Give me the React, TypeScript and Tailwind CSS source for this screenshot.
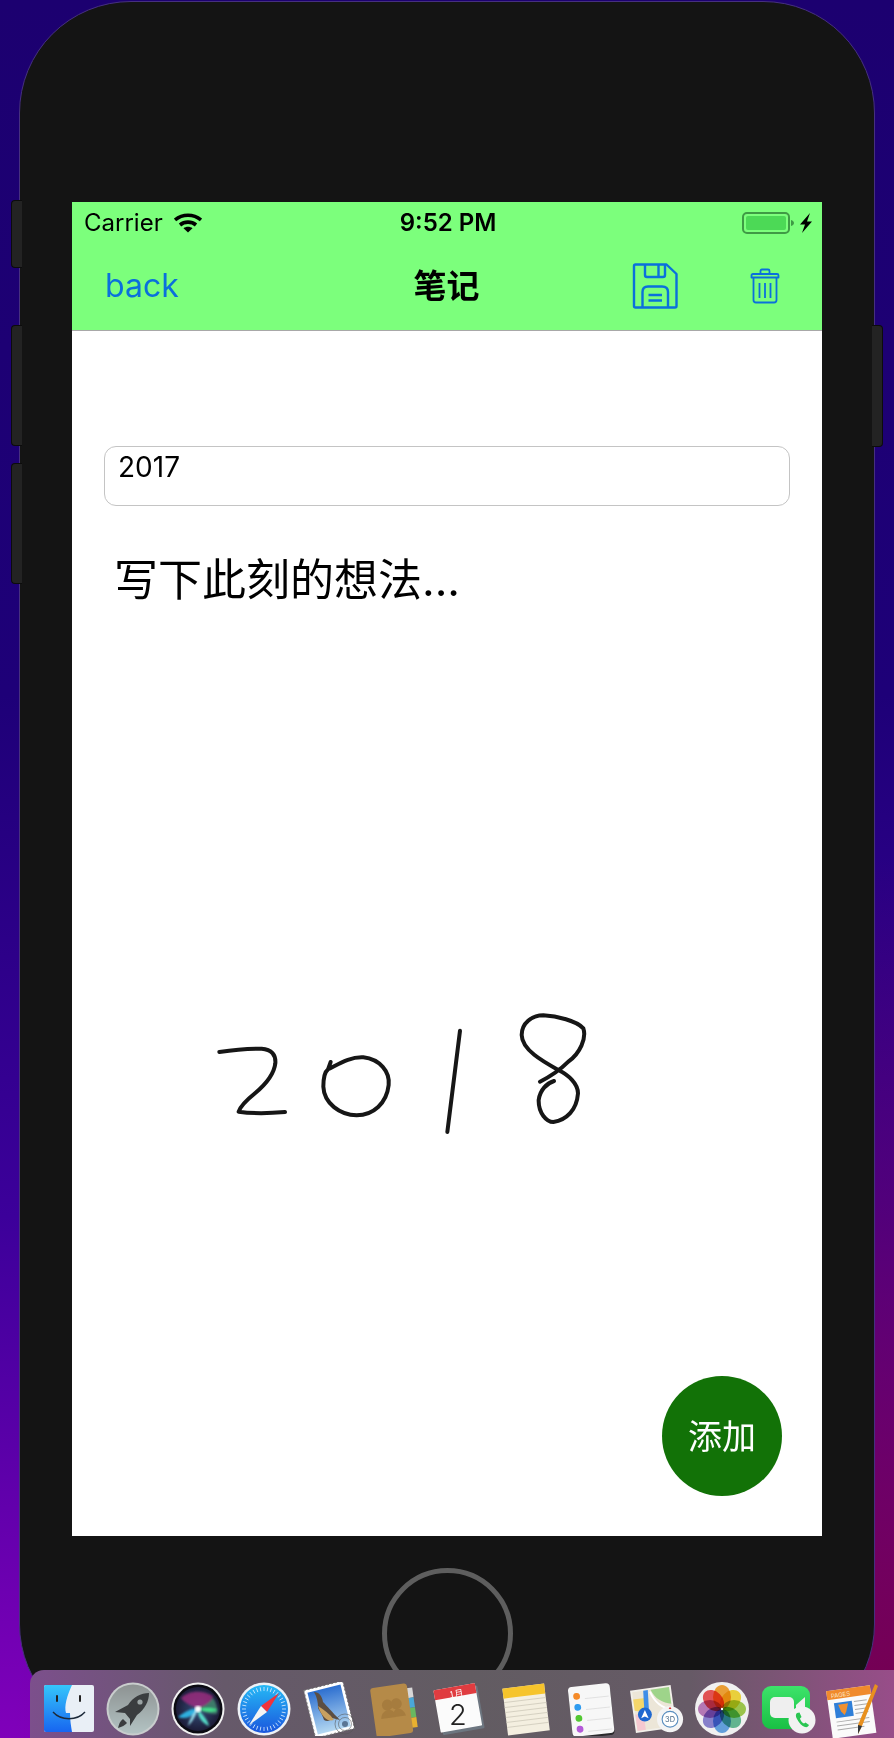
import React from "react";

const sans = "font-['Inter','Noto_Sans_CJK_SC',sans-serif]";

function Wifi() {
  return (
    <svg width="28" height="20" viewBox="0 0 28 20" className="text-black">
      <path d="M1 7 C8.5 0.6 19.5 0.6 27 7" fill="none" stroke="currentColor" strokeWidth="3.6" />
      <path d="M6 12 C10.5 8.2 17.5 8.2 22 12" fill="none" stroke="currentColor" strokeWidth="3.6" />
      <path d="M9.5 15.2 C12 13.2 16 13.2 18.5 15.2 L14 19.6 Z" fill="currentColor" />
    </svg>
  );
}

function Battery() {
  return (
    <svg width="70" height="24" viewBox="0 0 70 24">
      <rect x="1" y="2" width="46" height="20" rx="4" fill="none" stroke="#3f9a45" strokeWidth="2" />
      <rect x="4" y="5" width="40" height="14" rx="2" fill="#4cd956" />
      <path d="M49 9 C51 9.5 52 11 52 12 C52 13 51 14.5 49 15 Z" fill="#3f9a45" />
      <path d="M58 13.5 L68 2 L65 10.5 L70 10.5 L60 22 L63 13.5 Z" fill="#000" />
    </svg>
  );
}

function SaveIcon() {
  return (
    <svg width="46" height="46" viewBox="0 0 46 46" fill="none" stroke="#0a70dc" strokeWidth="2.4" strokeLinejoin="round">
      <path d="M2 3 Q2 1.5 3.5 1.5 L34.5 1.5 L44.5 11 L44.5 43 Q44.5 44.5 43 44.5 L3.5 44.5 Q2 44.5 2 43 Z" />
      <path d="M13 2 L13 12 Q13 14 15 14 L31 14 Q33 14 33 12 L33 2" />
      <path d="M26.5 2 L26.5 13.5" />
      <path d="M10.5 44 L10.5 29 Q10.5 23.5 16 23.5 L30 23.5 Q36 23.5 36 29 L36 44" />
      <path d="M16.5 32 L30 32 M16.5 37.5 L30 37.5" />
    </svg>
  );
}

function TrashIcon() {
  return (
    <svg width="30" height="36" viewBox="0 0 30 36" fill="none" stroke="#0a70dc" strokeWidth="1.8" strokeLinejoin="round">
      <path d="M1.5 7.5 Q1.5 6 3 6 L27 6 Q28.5 6 28.5 7.5 L28.5 9.5 L1.5 9.5 Z" />
      <path d="M10.5 6 L10.5 3 Q10.5 1.5 12 1.5 L18 1.5 Q19.5 1.5 19.5 3 L19.5 6" />
      <path d="M3.5 9.5 L3.5 32 Q3.5 34.5 6 34.5 L24 34.5 Q26.5 34.5 26.5 32 L26.5 9.5" />
      <path d="M9.5 15 L9.5 30 M15 15 L15 30 M20.5 15 L20.5 30" />
    </svg>
  );
}

function Handwriting() {
  return (
    <svg viewBox="0 0 1200 450" className="w-[400px] h-[150px] ml-[128px] mt-[390px] shrink-0" fill="none" stroke="#161616" strokeWidth="12" strokeLinecap="round" strokeLinejoin="round">
      <path d="M58 156 C100 150 150 146 185 146 C215 148 228 165 226 190 C222 225 195 255 165 280 C145 296 122 318 116 335 C150 340 210 340 255 336" />
      <path d="M392 186 L384 208 C420 190 450 170 490 172 C540 178 570 215 566 255 C560 310 520 345 470 346 C420 345 372 310 370 260 C370 235 375 215 384 208" />
      <path d="M780 92 L742 396" />
      <path d="M1062 243 C1040 250 1020 270 1016 300 C1015 340 1040 366 1060 366 C1100 360 1130 330 1134 280 C1134 250 1105 225 1075 210 C1030 185 966 150 965 105 C965 70 995 46 1030 46 C1070 48 1130 62 1150 85 C1160 115 1140 160 1105 185 C1090 200 1060 225 1020 245" />
    </svg>
  );
}

/* dock icons, all on a 54 box */
function Finder() {
  return (
    <svg viewBox="0 0 54 54" className="w-[54px] h-[54px] shrink-0">
      <defs>
        <linearGradient id="fb" x1="0" y1="0" x2="0" y2="1"><stop offset="0" stopColor="#35c6fb" /><stop offset="1" stopColor="#1765f0" /></linearGradient>
      </defs>
      <rect x="4" y="3" width="50" height="47" rx="2" fill="#e9eff6" />
      <path d="M6 3 L32 3 C27 14 24 24 26 31 L30 31 C30 38 31 44 32 50 L6 50 Q4 50 4 48 L4 5 Q4 3 6 3 Z" fill="url(#fb)" />
      <path d="M17 14 L17 19 M40 14 L40 19" stroke="#222" strokeWidth="2" strokeLinecap="round" />
      <path d="M13 30 C21 39 37 39 45 30" stroke="#1d2a3a" strokeWidth="1.4" fill="none" />
    </svg>
  );
}

function Launchpad() {
  return (
    <svg viewBox="0 0 54 54" className="w-[54px] h-[54px] shrink-0">
      <defs>
        <linearGradient id="lp" x1="0" y1="0" x2="0" y2="1"><stop offset="0" stopColor="#8d9292" /><stop offset="1" stopColor="#b3c3c3" /></linearGradient>
      </defs>
      <circle cx="27" cy="27" r="26.5" fill="#c9cdcd" />
      <circle cx="27" cy="27" r="24.5" fill="url(#lp)" />
      <path d="M43 11 C35 11 27 15 22 23 L9 30 L19 31 L24 37 L24 44 L31 33 C39 27 43 19 43 11 Z" fill="#3a3d3f" />
      <path d="M17 37 C14 39 13 42 12 46 C16 45 19 43 21 41 Z" fill="#3a3d3f" />
      <circle cx="34" cy="20" r="2.6" fill="#9aa3a3" />
    </svg>
  );
}

function Siri() {
  return (
    <svg viewBox="0 0 54 54" className="w-[54px] h-[54px] shrink-0">
      <defs>
        <radialGradient id="sr" cx="0.5" cy="0.5" r="0.55"><stop offset="0" stopColor="#34507c" /><stop offset="1" stopColor="#1a1630" /></radialGradient>
        <filter id="srb"><feGaussianBlur stdDeviation="1.1" /></filter>
      </defs>
      <circle cx="27" cy="27" r="26.5" fill="#f2f2f2" />
      <circle cx="27" cy="27" r="24.5" fill="#0b0b12" />
      <circle cx="27" cy="27" r="22" fill="url(#sr)" />
      <g filter="url(#srb)">
        <path d="M10 16 C18 8 32 8 42 14 C40 22 32 26 27 27 C22 24 14 22 10 16 Z" fill="#a02c80" opacity="0.8" />
        <path d="M42 16 C46 22 47 28 46 32 C38 32 32 30 27 27 C32 24 38 22 42 16 Z" fill="#3e7a6a" />
        <path d="M47 28 C40 31 34 30 27 27 C33 26 41 25 47 28 Z" fill="#44e08c" />
        <path d="M7 35 C15 29 21 26 27 27 C24 33 16 38 7 35 Z" fill="#2fb0e0" />
        <path d="M27 27 C31 32 37 38 38 44 C31 41 26 34 27 27 Z" fill="#55dcc8" />
        <path d="M27 27 C25 33 21 40 17 44 C19 36 23 30 27 27 Z" fill="#9fe8f5" />
      </g>
      <circle cx="27" cy="27" r="3.2" fill="#fff" filter="url(#srb)" />
    </svg>
  );
}

function Safari() {
  const ticks = Array.from({ length: 36 }, (_, i) => i * 10);
  return (
    <svg viewBox="0 0 54 54" className="w-[54px] h-[54px] shrink-0">
      <defs>
        <linearGradient id="sf" x1="0" y1="0" x2="0" y2="1"><stop offset="0" stopColor="#25b9f5" /><stop offset="1" stopColor="#1b56dd" /></linearGradient>
      </defs>
      <circle cx="27" cy="27" r="26.5" fill="#eef2f6" />
      <circle cx="27" cy="27" r="24" fill="url(#sf)" />
      {ticks.map((a) => (
        <path key={a} d="M27 5 L27 9" stroke="#d8ecff" strokeWidth="0.8" transform={`rotate(${a} 27 27)`} />
      ))}
      <path d="M42 11 L30 30 L24 24 Z" fill="#f0323a" />
      <path d="M12 43 L24 24 L30 30 Z" fill="#f4f4f4" />
    </svg>
  );
}

function MailStamp() {
  return (
    <svg viewBox="0 0 54 54" className="w-[54px] h-[54px] shrink-0">
      <defs>
        <linearGradient id="ms" x1="0" y1="0" x2="0" y2="1"><stop offset="0" stopColor="#2d6fd0" /><stop offset="1" stopColor="#b4d8f2" /></linearGradient>
      </defs>
      <g transform="rotate(-14 27 27)">
        <rect x="7" y="3" width="40" height="49" fill="#fff" stroke="#777" strokeWidth="1" strokeDasharray="2 2" />
        <rect x="10" y="6" width="34" height="43" fill="url(#ms)" />
      </g>
      <path d="M12 10 C17 10 20 14 21 20 C25 24 30 30 38 38 L30 36 C28 39 25 40 22 38 C20 32 18 30 16 26 C16 20 15 15 12 10 Z" fill="#5c4e42" />
      <path d="M16 24 C22 28 28 32 32 38 C26 40 20 36 16 24 Z" fill="#c8a060" />
      <circle cx="43" cy="42" r="10" fill="none" stroke="#555" strokeWidth="1" opacity="0.55" />
      <circle cx="43" cy="42" r="6.5" fill="none" stroke="#555" strokeWidth="1" opacity="0.55" />
      <circle cx="43" cy="42" r="3" fill="#39506e" opacity="0.7" />
    </svg>
  );
}

function Contacts() {
  return (
    <svg viewBox="0 0 54 54" className="w-[54px] h-[54px] shrink-0">
      <g transform="rotate(-8 27 27)">
        <rect x="41" y="8" width="6" height="10" fill="#d8d8d8" />
        <rect x="41" y="18" width="6" height="10" fill="#4aa8d8" />
        <rect x="41" y="28" width="6" height="10" fill="#68b860" />
        <rect x="41" y="38" width="6" height="10" fill="#e8b030" />
        <rect x="5" y="3" width="37" height="50" rx="3" fill="#b58a48" />
        <circle cx="20" cy="22" r="5.5" fill="#a67c3e" />
        <circle cx="29" cy="22" r="5.5" fill="#a67c3e" />
        <path d="M12 35 C13 29 17 27 20 27 C23 27 27 29 27 35 Z M24 35 C25 29 27 27 29 27 C32 27 36 29 37 35 Z" fill="#a67c3e" />
      </g>
    </svg>
  );
}

function Calendar() {
  return (
    <svg viewBox="0 0 54 54" className="w-[54px] h-[54px] shrink-0">
      <g transform="rotate(-10 27 27)">
        <rect x="6" y="7" width="42" height="43" rx="1" fill="#6d7680" />
        <rect x="4" y="4" width="42" height="43" rx="1" fill="#fbfbfb" />
        <path d="M4 5 Q4 4 5 4 L45 4 Q46 4 46 5 L46 14 L4 14 Z" fill="#e03c40" />
      </g>
      <text x="24" y="15" textAnchor="middle" fontSize="9" fill="#fff" className="font-['Noto_Sans_CJK_SC',sans-serif]" transform="rotate(-10 24 15)">1月</text>
      <text x="25" y="43" textAnchor="middle" fontSize="29" fill="#222" fontWeight="300" className="font-['Inter',sans-serif]">2</text>
    </svg>
  );
}

function Notes() {
  const lines = [18, 23, 28, 33, 38, 43];
  return (
    <svg viewBox="0 0 54 54" className="w-[54px] h-[54px] shrink-0">
      <g transform="rotate(-7 27 27)">
        <rect x="6" y="4" width="42" height="47" fill="#f4efe0" />
        <rect x="6" y="4" width="42" height="10" fill="#f6c42c" />
        {lines.map((y) => (
          <path key={y} d={`M6 ${y} L48 ${y}`} stroke="#cfcabb" strokeWidth="0.8" />
        ))}
      </g>
    </svg>
  );
}

function Reminders() {
  const items = [
    { y: 13, c: "#f58a28" },
    { y: 24, c: "#2f9cf0" },
    { y: 35, c: "#52c832" },
    { y: 46, c: "#b45ad8" },
  ];
  return (
    <svg viewBox="0 0 54 54" className="w-[54px] h-[54px] shrink-0">
      <g transform="rotate(-6 27 27)">
        <rect x="6" y="6" width="42" height="49" rx="4" fill="#2a2a2c" />
        <rect x="6" y="3" width="42" height="50" rx="4" fill="#f7f7f7" />
        {items.map((it) => (
          <g key={it.y}>
            <circle cx="14" cy={it.y} r="3.4" fill={it.c} />
            <path d={`M22 ${it.y + 3} L46 ${it.y + 3}`} stroke="#d8d8d8" strokeWidth="0.7" />
          </g>
        ))}
      </g>
    </svg>
  );
}

function Maps() {
  return (
    <svg viewBox="0 0 58 54" className="w-[54px] h-[54px] shrink-0 overflow-visible">
      <g transform="rotate(-8 25 27)">
        <rect x="3" y="4" width="44" height="46" fill="#f2f0ea" />
        <rect x="5" y="6" width="40" height="42" fill="#ece6d8" />
        <path d="M25 6 L45 6 L45 24 C36 22 28 16 25 6 Z" fill="#9ed48a" />
        <path d="M5 14 L18 14 L18 30 L5 26 Z" fill="#f4d66a" />
        <path d="M5 30 L14 34 L14 48 L5 48 Z" fill="#f5c8d0" />
        <path d="M17 6 L22 6 L20 30 L15 30 Z" fill="#3f8ee8" />
        <path d="M24 8 C28 22 36 28 45 30" stroke="#fff" strokeWidth="2" fill="none" />
      </g>
      <circle cx="16" cy="33" r="7.5" fill="#1f68d0" />
      <path d="M16 28 L20 37 L16 35 L12 37 Z" fill="#fff" />
      <circle cx="43" cy="38" r="14" fill="#f4f4f4" />
      <circle cx="43" cy="38" r="8.5" fill="#fff" stroke="#5b8fc0" strokeWidth="1.2" />
      <text x="43" y="41" textAnchor="middle" fontSize="8" fill="#4a6a8a" className="font-['Inter',sans-serif]">3D</text>
      <path d="M41.5 27 L43 24.5 L44.5 27 Z" fill="#d83030" />
    </svg>
  );
}

function Photos() {
  const petals = [
    { a: 0, c: "#f8a838" },
    { a: 45, c: "#f8dc40" },
    { a: 90, c: "#a4d050" },
    { a: 135, c: "#68c098" },
    { a: 180, c: "#68a8e8" },
    { a: 225, c: "#9088d8" },
    { a: 270, c: "#c080c0" },
    { a: 315, c: "#f05858" },
  ];
  return (
    <svg viewBox="0 0 54 54" className="w-[54px] h-[54px] shrink-0">
      <circle cx="27" cy="27" r="27" fill="#f0f0f0" />
      {petals.map((p) => (
        <ellipse key={p.a} cx="27" cy="15" rx="9" ry="12" fill={p.c} className="mix-blend-multiply" transform={`rotate(${p.a} 27 27)`} />
      ))}
      <circle cx="27" cy="27" r="1.2" fill="#fff" />
    </svg>
  );
}

function FaceTime() {
  return (
    <svg viewBox="0 0 54 54" className="w-[54px] h-[54px] shrink-0 overflow-visible">
      <defs>
        <linearGradient id="ft" x1="0" y1="0" x2="0" y2="1"><stop offset="0" stopColor="#3de36a" /><stop offset="1" stopColor="#19c044" /></linearGradient>
      </defs>
      <rect x="1" y="4" width="48" height="43" rx="9" fill="url(#ft)" />
      <rect x="9" y="15" width="24" height="21" rx="5" fill="#efefef" />
      <path d="M35 23 L44 15 L44 36 L35 28 Z" fill="#efefef" />
      <circle cx="41" cy="38" r="13.5" fill="#f2f2f2" />
      <path d="M36 31 C34.5 32 34.5 34.5 36 37 C38 41 41 44 44 45 C46 45.5 47.5 44.5 48 43 L44.5 40.5 L43 41.5 C41 41 39.5 38.5 39 36.5 L40.5 35 L38.5 30.5 Z" fill="#2ac652" />
    </svg>
  );
}

function Pages() {
  return (
    <svg viewBox="0 0 54 54" className="w-[54px] h-[54px] shrink-0 overflow-visible">
      <g transform="rotate(-8 25 28)">
        <rect x="3" y="6" width="44" height="48" fill="#fafafa" />
        <rect x="3" y="6" width="44" height="9" fill="#f08a2c" />
        <text x="7" y="13.5" fontSize="6" fill="#fde8c8" className="font-['Inter',sans-serif]">PAGES</text>
        <rect x="9" y="19" width="18" height="15" fill="#2f7fd8" />
        <path d="M13 21 L23 21 L20 29 L18 32 L15 28 Z" fill="#f09030" />
        <path d="M29 20 L42 20 M29 24 L42 24 M29 28 L42 28 M29 32 L42 32 M9 38 L42 38 M9 42 L42 42 M9 46 L36 46" stroke="#aaa" strokeWidth="1" />
      </g>
      <path d="M49 2 L52 4 L36 44 L32 52 L32 43 Z" fill="#e8901e" />
      <path d="M32 43 L36 44 L32 52 Z" fill="#30353a" />
    </svg>
  );
}

function Doc() {
  return (
    <svg viewBox="0 0 54 54" className="w-[54px] h-[54px] shrink-0">
      <rect x="2" y="32" width="40" height="22" fill="#f2eef2" />
    </svg>
  );
}

export default function App() {
  return (
    <div className={`relative h-[1738px] w-[894px] overflow-hidden bg-[radial-gradient(circle_at_100%_100%,#74004c_0%,transparent_45%),linear-gradient(180deg,#1c0070_0%,#1e0078_40%,#3c009a_70%,#8000ba_100%)] ${sans}`}>
      <div className="relative mt-px ml-[19px] flex h-[1735px] w-[856px] flex-col items-center rounded-[112px] border border-[#46307f] bg-[#141414] pt-[200px]">
        {/* side buttons */}
        <div className="absolute -left-[9px] top-[198px] h-[68px] w-[11px] rounded-l-[4px] border border-r-0 border-[#0c0c0c] bg-[#232323]" />
        <div className="absolute -left-[9px] top-[323px] h-[121px] w-[11px] rounded-l-[4px] border border-r-0 border-[#0c0c0c] bg-[#232323]" />
        <div className="absolute -left-[9px] top-[461px] h-[121px] w-[11px] rounded-l-[4px] border border-r-0 border-[#0c0c0c] bg-[#232323]" />
        <div className="absolute -right-[9px] top-[323px] h-[122px] w-[11px] rounded-r-[4px] border border-l-0 border-[#0c0c0c] bg-[#232323]" />

        <div className="flex h-[1334px] w-[750px] shrink-0 flex-col bg-white">
          <div className="shrink-0 border-b border-[#a8a8a8] bg-[#7cff7c]">
            <div className="flex h-[40px] items-center pl-3 pr-[10px] pt-px text-black">
              <div className="flex flex-1 items-center gap-[11px]">
                <span className="text-[24px] leading-none">Carrier</span>
                <Wifi />
              </div>
              <span className="text-[24px] font-semibold leading-none">9:52 PM</span>
              <div className="flex flex-1 justify-end">
                <Battery />
              </div>
            </div>
            <div className="flex h-[88px] items-center px-[33px]">
              <div className="flex-1 text-[32px] leading-none text-[#0a70dc]">back</div>
              <div className="pl-[8px] text-[33px] font-semibold leading-none text-black">笔记</div>
              <div className="flex flex-1 items-center justify-end gap-[72px] pr-[9px]">
                <SaveIcon />
                <TrashIcon />
              </div>
            </div>
          </div>

          <div className="relative flex flex-1 flex-col">
            <div className="mx-8 mt-[115px] h-[60px] shrink-0 rounded-[12px] border border-[#c4c4c4] px-[13px] pt-[3px] text-[28px] leading-[34px] text-black">
              2017
            </div>
            <div className="ml-[42px] mt-[44px] text-[44px] leading-[60px] text-black">写下此刻的想法...</div>
            <Handwriting />
            <button className="absolute right-[40px] bottom-[40px] flex h-[120px] w-[120px] items-center justify-center rounded-full bg-[#127207] text-[34px] text-white">
              添加
            </button>
          </div>
        </div>

        <div className="mt-8 h-[131px] w-[131px] shrink-0 rounded-full border-[5px] border-[#5e5e5e]" />
      </div>

      {/* mac dock over the bottom edge */}
      <div className="absolute left-[30px] top-[1670px] flex h-[68px] w-[880px] gap-[11.5px] overflow-hidden rounded-tl-[14px] bg-[linear-gradient(90deg,#7c4f8c_0%,#66596a_22%,#625c62_50%,#665a66_75%,#9c4c8c_100%)] pl-[10px] pt-[12px]">
        <Finder />
        <Launchpad />
        <Siri />
        <Safari />
        <MailStamp />
        <Contacts />
        <Calendar />
        <Notes />
        <Reminders />
        <Maps />
        <Photos />
        <FaceTime />
        <Pages />
        <Doc />
      </div>
    </div>
  );
}
